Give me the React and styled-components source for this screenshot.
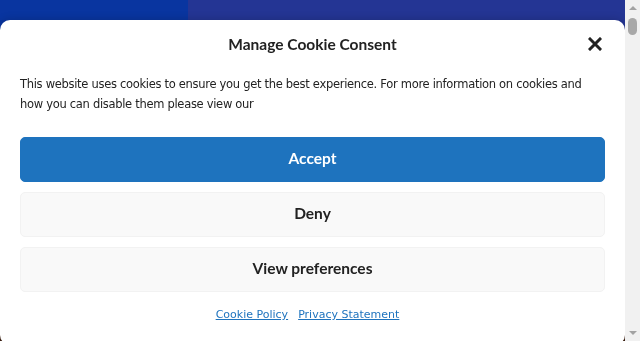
import React from 'react';
import styled, { createGlobalStyle } from 'styled-components';

const GlobalStyle = createGlobalStyle`
  html, body {
    margin: 0;
    padding: 0;
  }
  body {
    background: #3b1e10;
    font-family: "DejaVu Sans", Verdana, sans-serif;
  }
`;

const Page = styled.div`
  min-height: 6200px;
  background: #3b1e10;
`;

const Banner = styled.div`
  display: grid;
  grid-template-columns: 188px 1fr;
  height: 120px;
`;

const BannerBlock = styled.div`
  background: ${(p) => p.$color};
`;

/* window scrollbar, drawn since the shot hides the native one */
const ScrollTrack = styled.div`
  position: fixed;
  top: 0;
  right: 0;
  bottom: 0;
  width: 15px;
  background: #f1f1f1;
  display: flex;
  flex-direction: column;
  align-items: center;
  padding: 6px 0;
  box-sizing: border-box;
`;

const Arrow = styled.div`
  width: 0;
  height: 0;
  border-left: 4px solid transparent;
  border-right: 4px solid transparent;
  ${(p) => (p.$down ? 'border-top: 4px solid #a3a3a3;' : 'border-bottom: 4px solid #a3a3a3;')}
  ${(p) => p.$down && 'margin-top: auto;'}
`;

const Thumb = styled.div`
  width: 9px;
  height: 17px;
  margin-top: 8px;
  border-radius: 5px;
  background: #a8a8a8;
`;

const Modal = styled.div`
  position: fixed;
  top: 20px;
  left: 0;
  right: 15px;
  background: #fff;
  border-radius: 10px;
  padding: 0 20px 20px;
  box-shadow: 0 0 10px rgba(0, 0, 0, 0.2);
`;

const Header = styled.div`
  display: grid;
  grid-template-columns: 1fr auto 1fr;
  align-items: center;
  height: 48px;
`;

const Title = styled.div`
  grid-column: 2;
  font-family: Lato, "Open Sans", sans-serif;
  font-weight: 700;
  font-size: 15.5px;
  color: #222;
`;

const Close = styled.button`
  justify-self: end;
  margin-right: 3px;
  background: none;
  border: 0;
  padding: 0;
  display: flex;
  cursor: pointer;
`;

const Message = styled.p`
  margin: 6px 0 23px;
  font-size: 11.5px;
  letter-spacing: -0.3px;
  line-height: 20px;
  color: #222;
`;

const Buttons = styled.div`
  display: flex;
  flex-direction: column;
  gap: 10px;
`;

const Button = styled.button`
  height: 45px;
  padding: 0 0 4px;
  border-radius: 5px;
  font-family: Lato, "Open Sans", sans-serif;
  font-weight: 700;
  font-size: 15.5px;
  cursor: pointer;
  background: ${(p) => (p.$primary ? '#1e73be' : '#f9f9f9')};
  color: ${(p) => (p.$primary ? '#fff' : '#222')};
  border: 1px solid ${(p) => (p.$primary ? '#1e73be' : '#f2f2f2')};
`;

const Links = styled.div`
  display: flex;
  justify-content: center;
  gap: 10px;
  margin-top: 13px;
  padding-right: 10px;
  line-height: 20px;
`;

const DocLink = styled.a`
  font-size: 11px;
  color: #1e73be;
  text-decoration: underline;
`;

const CloseIcon = () => (
  <svg width="14" height="14" viewBox="0 0 14 14">
    <path d="M2 2 L12 12 M12 2 L2 12" stroke="#222" strokeWidth="3" strokeLinecap="square" />
  </svg>
);

const App = () => {
  return (
    <Page>
      <GlobalStyle />
      <Banner>
        <BannerBlock $color="#0935a0" />
        <BannerBlock $color="#243594" />
      </Banner>
      <Modal>
        <Header>
          <Title>Manage Cookie Consent</Title>
          <Close aria-label="close">
            <CloseIcon />
          </Close>
        </Header>
        <Message>
          This website uses cookies to ensure you get the best experience. For more information on cookies and how you can disable them please view our
        </Message>
        <Buttons>
          <Button $primary>Accept</Button>
          <Button>Deny</Button>
          <Button>View preferences</Button>
        </Buttons>
        <Links>
          <DocLink href="#">Cookie Policy</DocLink>
          <DocLink href="#">Privacy Statement</DocLink>
        </Links>
      </Modal>
      <ScrollTrack>
        <Arrow />
        <Thumb />
        <Arrow $down />
      </ScrollTrack>
    </Page>
  );
};

export default App;
